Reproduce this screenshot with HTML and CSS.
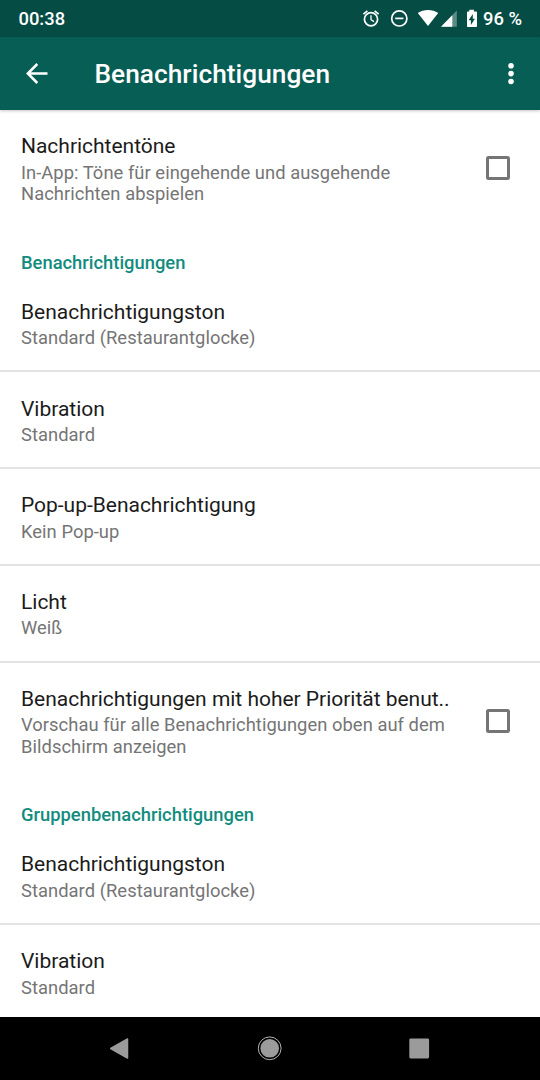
FILE: index.html
```html
<!DOCTYPE html>
<html lang="de">
<head>
<meta charset="utf-8">
<title>Benachrichtigungen</title>
<link rel="stylesheet" href="styles.css">
</head>
<body>
<div class="screen">
  <header class="status">
    <span class="clock">00:38</span>
    <svg class="status-icons" width="122" height="24" viewBox="360 7 122 24">
      <g fill="none" stroke="#fff" stroke-width="1.7">
        <circle cx="371" cy="19.3" r="6.6"/>
        <path d="M371 15.2v4.500l3 1.900" stroke-width="1.300"/>
        <path d="M363.400 14.200l4-3.400M378.600 14.200l-4-3.400"/>
        <circle cx="399.300" cy="18.400" r="7.600"/>
        <path d="M395.200 18.400h8.200"/>
      </g>
      <path d="M417.800 13c5.500-4 14.900-4 20.400 0L428 26z" fill="#fff"/>
      <path d="M456.800 10.500V26.800H441z" fill="#fff" opacity=".35"/>
      <path d="M452.300 15.200V26.800H441z" fill="#fff"/>
      <path fill="#fff" fill-rule="evenodd" d="M469.300 9.700h4.600v1.800h2.300q.8 0 .8.8v13.900q0 .8-.8.8h-8.400q-.8 0-.8-.8V12.300q0-.8.800-.8h1.500zM472.800 14l-4.200 6.200h2.300V25l4-6.300h-2.100z"/>
    </svg>
    <span class="battery">96 %</span>
  </header>
  <nav class="appbar">
    <svg class="back" width="24" height="24" viewBox="0 0 24 24"><path d="M22.500 11.500H3M12.300 2L2.800 11.500l9.500 9.500" fill="none" stroke="#fff" stroke-width="2.500"/></svg>
    <h1 class="title">Benachrichtigungen</h1>
    <svg class="more" width="8" height="24" viewBox="0 0 8 24" fill="#fff"><circle cx="4" cy="3.800" r="2.800"/><circle cx="4" cy="11.600" r="2.800"/><circle cx="4" cy="19.500" r="2.800"/></svg>
  </nav>
  <main class="list">
    <section class="row row-check">
      <div class="text">
        <div class="name">Nachrichtentöne</div>
        <div class="desc">In-App: Töne für eingehende und ausgehende<br>Nachrichten abspielen</div>
      </div>
      <span class="checkbox"></span>
    </section>
    <h2 class="heading">Benachrichtigungen</h2>
    <section class="row ruled"><div class="name">Benachrichtigungston</div><div class="desc">Standard (Restaurantglocke)</div></section>
    <section class="row ruled"><div class="name">Vibration</div><div class="desc">Standard</div></section>
    <section class="row ruled"><div class="name">Pop-up-Benachrichtigung</div><div class="desc">Kein Pop-up</div></section>
    <section class="row ruled"><div class="name">Licht</div><div class="desc">Weiß</div></section>
    <section class="row row-check">
      <div class="text">
        <div class="name">Benachrichtigungen mit hoher Priorität benut..</div>
        <div class="desc">Vorschau für alle Benachrichtigungen oben auf dem<br>Bildschirm anzeigen</div>
      </div>
      <span class="checkbox"></span>
    </section>
    <h2 class="heading">Gruppenbenachrichtigungen</h2>
    <section class="row ruled"><div class="name">Benachrichtigungston</div><div class="desc">Standard (Restaurantglocke)</div></section>
    <section class="row"><div class="name">Vibration</div><div class="desc">Standard</div></section>
  </main>
  <footer class="navbar">
    <svg width="540" height="63" viewBox="0 1017 540 63">
      <path d="M127.500 1039v19L110.700 1048.500z" fill="#9b9b9b" stroke="#9b9b9b" stroke-width="1.500" stroke-linejoin="round"/>
      <circle cx="269.700" cy="1048.300" r="9.300" fill="#9b9b9b"/>
      <circle cx="269.700" cy="1048.300" r="11.400" fill="none" stroke="#b4b4b4" stroke-width="1"/>
      <rect x="409.300" y="1038.400" width="19.800" height="20" rx="1.300" fill="#9b9b9b"/>
    </svg>
  </footer>
</div>
</body>
</html>
```
FILE: styles.css
```css
* { box-sizing: border-box; }
body { margin: 0; font-family: Roboto, sans-serif; background: #fff; }
.screen { width: 540px; height: 1080px; display: flex; flex-direction: column; overflow: hidden; }
.status { flex: none; height: 37px; padding: 0 18px 0 18.5px; background: #054d44; color: #fff; display: flex; align-items: center; font-size: 18.375px; font-weight: 500; line-height: 38px; }
.clock { flex: 1; }
.status-icons { display: block; margin-right: 1px; }
.battery { width: 39px; white-space: nowrap; }
.appbar { flex: none; height: 73px; background: #075e54; color: #fff; display: flex; align-items: center; padding: 0 25px; box-shadow: 0 1px 3px rgba(0,0,0,.22); z-index: 1; }
.title { flex: 1; margin: 1px 0 0 45.5px; font-size: 26.25px; font-weight: 500; line-height: 32px; letter-spacing: .03px; }
.list { flex: 1; min-height: 0; overflow: hidden; }
.row { height: 96.7px; padding: 24.1px 21px 0; }
.row-check { height: 118.25px; display: flex; justify-content: space-between; }
.ruled { border-bottom: 2px solid #e3e3e3; }
.name { font-size: 21px; line-height: 25px; color: #1b1b1b; white-space: nowrap; letter-spacing: -.02px; }
.desc { margin-top: 2.5px; font-size: 18.375px; line-height: 21.5px; color: #757575; white-space: nowrap; letter-spacing: .04px; }
.checkbox { flex: none; width: 24px; height: 24px; margin: 22px 9px 0 0; border: 3px solid #757575; border-radius: 2.5px; }
.heading { margin: 0; height: 47.55px; padding: 23.5px 21px 0; font-size: 18.375px; font-weight: 500; line-height: 22px; color: #128c7e; }
.navbar { flex: none; height: 63px; background: #000; }
.navbar svg { display: block; }
```
